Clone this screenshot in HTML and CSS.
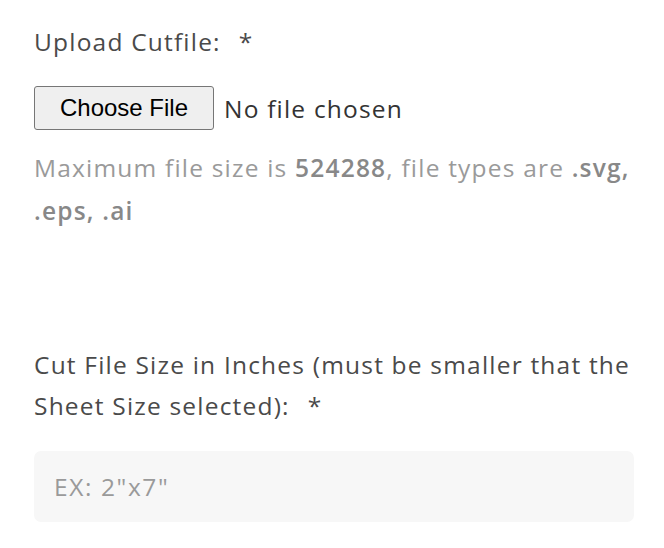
FILE: index.html
```html
<!DOCTYPE html>
<html>
<head>
<meta charset="utf-8">
<link rel="stylesheet" href="styles.css">
</head>
<body>
<form class="form">
  <div class="field">
    <label class="label">Upload Cutfile:<span class="req">*</span></label>
    <div class="file-row">
      <button type="button" class="file-btn">Choose File</button>
      <span class="file-none">No file chosen</span>
    </div>
    <p class="help">Maximum file size is <b>524288</b>, file types are <b>.svg, .eps, .ai</b></p>
  </div>
  <div class="field field-2">
    <label class="label">Cut File Size in Inches (must be smaller that the Sheet Size selected):<span class="req">*</span></label>
    <input class="text-input" type="text" placeholder="EX: 2&quot;x7&quot;">
  </div>
</form>
</body>
</html>
```
FILE: styles.css
```css
html, body {
  margin: 0;
  padding: 0;
  background: #fff;
}
body {
  font-family: "Open Sans", Roboto, sans-serif;
  color: #4a4a4a;
  font-size: 24.5px;
  letter-spacing: 1.2px;
}
.form {
  width: 603px;
  padding: 21px 0 0 34px;
}
.label {
  display: block;
  line-height: 41px;
  color: #4a4a4a;
}
.req {
  margin-left: 18px;
}
.file-row {
  display: flex;
  align-items: center;
  gap: 10px;
  margin-top: 24px;
}
.file-btn {
  font-family: "Liberation Sans", Arial, sans-serif;
  font-size: 24px;
  letter-spacing: 0;
  color: #000;
  background: #efefef;
  border: 1px solid #767676;
  border-radius: 3px;
  height: 44px;
  width: 180px;
  padding: 0;
}
.file-none {
  color: #333;
}
.help {
  margin: 16px 0 0;
  line-height: 43px;
  color: #9a9a9a;
}
.help b {
  color: #888;
  font-weight: 600;
}
.field-2 {
  margin-top: 112px;
}
.text-input {
  display: block;
  box-sizing: border-box;
  margin-top: 25px;
  width: 600px;
  height: 71px;
  border: none;
  border-radius: 7px;
  background: #f7f7f7;
  padding: 0 20px;
  font-family: "Open Sans", Roboto, sans-serif;
  font-size: 24.5px;
  letter-spacing: 1.6px;
  color: #333;
  outline: none;
}
.text-input::placeholder {
  color: #9a9a9a;
}
```
